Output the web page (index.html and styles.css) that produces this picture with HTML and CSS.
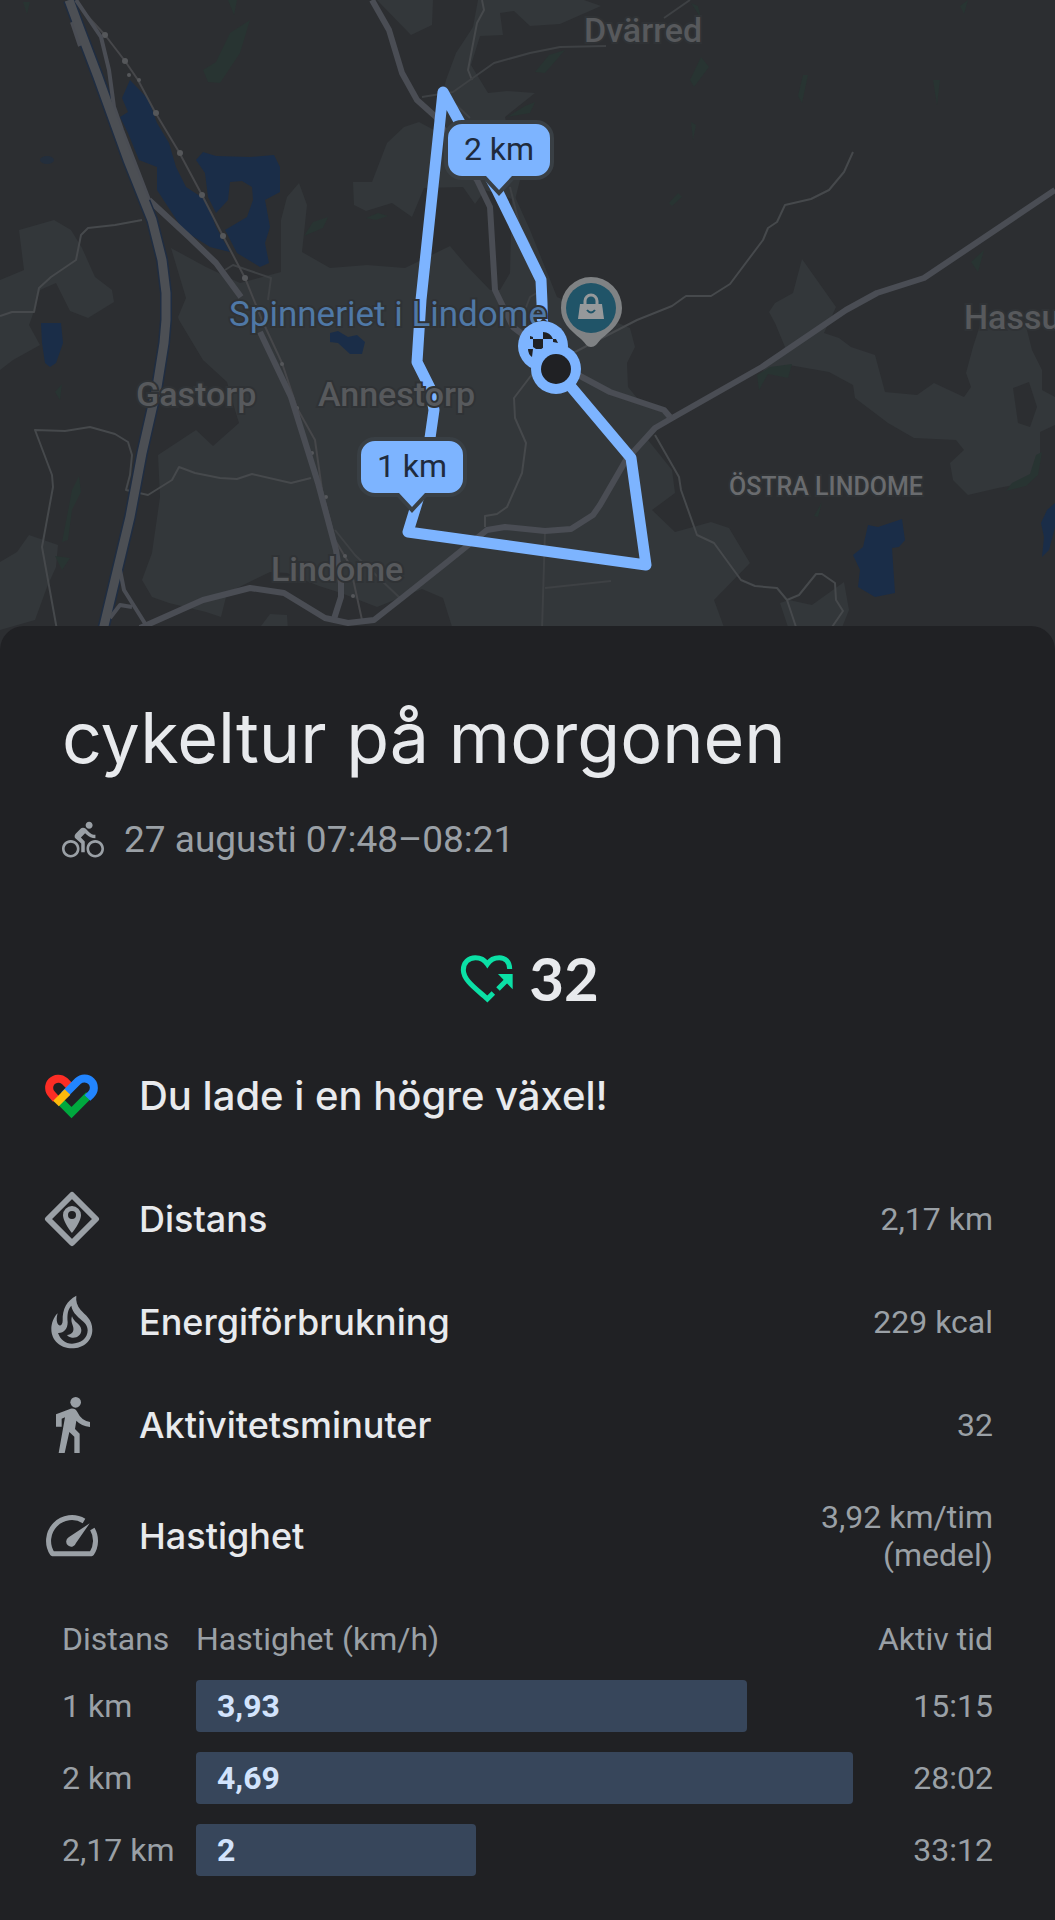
FILE: index.html
```html
<!DOCTYPE html>
<html lang="sv">
<head>
    <meta charset="UTF-8">
    <meta name="viewport" content="width=device-width, initial-scale=1">
    <title>cykeltur på morgonen</title>
    <link rel="stylesheet" href="styles.css">
</head>
<body>

    <svg class="map" viewBox="0 0 1055 650" role="img" aria-label="Karta över rutten">
        <!-- land -->
        <g class="land">
            <polygon points="377,0 411,35 432,25 433,0"/>
            <polygon points="478,0 584,0 601,6 560,24 530,26 514,11 500,13 503,35 480,36 471,65 488,93 507,91 535,93 505,117 520,180 515,200 485,190 475,204 463,187 424,188 412,217 392,203 366,211 354,205 353,182 372,182 387,143 404,127 419,122 434,130 446,80 456,53 473,27"/>
            <polygon points="299,183 307,205 302,252 330,268 367,265 405,268 450,246 466,265 490,290 500,290 510,273 512,190 530,230 557,297 630,328 635,347 627,363 628,387 637,398 670,417 648,440 672,470 675,493 652,510 675,532 711,522 729,528 750,563 714,600 725,630 453,630 443,598 422,589 377,607 341,593 319,586 287,573 270,572 227,593 221,617 206,612 169,603 152,597 142,580 152,553 160,497 158,455 196,430 213,446 239,423 235,410 227,382 203,360 179,320 178,317 186,298 171,248 206,267 240,283 281,272 281,220 287,197"/>
            <polygon points="0,280 24,270 19,230 54,220 71,230 82,248 95,277 112,290 114,302 88,318 70,311 56,283 40,290 32,317 29,325 40,345 13,360 0,370"/>
            <polygon points="0,562 17,552 29,535 58,545 56,567 47,587 35,620 0,630"/>
            <polygon points="802,259 836,307 824,333 839,338 851,347 875,355 885,392 917,395 934,383 964,397 971,387 966,373 973,347 981,322 1025,322 1032,350 1042,370 1042,390 1055,397 1055,425 1040,432 1040,455 1035,475 1025,483 998,488 968,495 953,480 950,463 964,450 956,440 914,438 888,423 855,398 853,385 829,372 789,365 762,372 785,347 775,323 769,312 775,303 793,293"/>
            <polygon points="780,603 789,600 812,605 844,582 849,610 841,630 789,630"/>
            <polygon points="258,630 270,614 287,615 288,630"/>
        </g>
        <polygon class="ground" points="1013,388 1029,382 1037,407 1030,427 1018,423"/>

        <!-- forest -->
        <g class="forest">
            <polygon points="203,70 216,62 230,33 250,20 240,53 220,83 208,82"/>
            <polygon points="228,0 237,0 234,15"/>
            <polygon points="23,2 30,2 27,14"/>
            <polygon points="304,236 313,222 328,217 323,228"/>
            <polygon points="366,218 378,213 388,216 376,220"/>
            <polygon points="535,72 549,55 565,50 545,73"/>
            <polygon points="690,80 701,57 709,67 694,87"/>
            <polygon points="691,3 698,6 701,18"/>
            <polygon points="960,6 968,0 964,14"/>
            <polygon points="691,122 696,125 693,140"/>
            <polygon points="669,203 678,193 682,197 672,206"/>
            <polygon points="803,75 808,75 802,103 798,96"/>
            <polygon points="933,80 940,80 937,105"/>
            <polygon points="971,262 984,250 978,272"/>
            <polygon points="1036,455 1042,452 1038,475 1026,486 1006,491 1012,483 1030,474"/>
            <polygon points="757,375 770,367 792,364 788,378 768,374 759,390"/>
            <polygon points="814,516 822,502 818,517"/>
            <polygon points="507,117 525,106 535,102 530,113"/>
            <polygon points="72,490 79,476 81,492 72,510 68,540 62,542"/>
            <polygon points="55,556 70,558 62,570"/>
            <polygon points="55,392 62,384 60,400"/>
        </g>

        <!-- water -->
        <g class="water">
            <polygon points="130,80 149,100 157,123 169,143 176,167 186,187 206,200 216,227 230,252 210,247 183,230 172,213 157,190 157,167 139,160 128,133 120,117 128,112 122,98"/>
            <polygon points="196,160 203,152 216,156 250,157 274,155 280,167 280,192 265,200 270,227 265,243 269,263 260,267 237,253 225,230 247,217 253,200 252,187 242,181 230,182 228,200 216,213 208,197 205,173"/>
            <polygon points="41,323 61,323 63,343 56,363 50,367 45,363 42,343"/>
            <polygon points="330,333 338,331 348,337 357,335 365,342 362,354 350,354 338,343 330,342"/>
            <polygon points="868,525 878,527 902,519 905,540 899,547 892,548 895,593 875,597 858,587 860,570 853,555 863,547"/>
            <polygon points="1055,503 1047,510 1041,523 1044,537 1042,557 1049,550 1055,527"/>
            <ellipse cx="47" cy="160" rx="7" ry="4" opacity=".5"/>
        </g>

        <!-- roads -->
        <g class="road small">
            <polyline points="0,316 12,312 34,312 39,288 51,277 76,260 81,235 88,228 115,225 142,220"/>
            <polyline points="57,630 42,547 53,487 52,475 35,430 65,431 90,427 115,434 128,442 132,455 130,475 126,490 148,495 172,480 179,467 195,473 220,478 237,479 252,474 291,483 311,478"/>
            <polyline points="853,152 844,172 829,190 811,199 785,205 777,222 768,228 763,240 730,284 711,296 686,296 672,306 637,320 575,352"/>
            <polyline points="655,435 679,477 681,490 697,535 714,543 741,580 755,586 777,588 787,600 797,630"/>
            <polyline points="787,600 799,595 816,574 822,574 835,583 836,600 843,611 830,630"/>
            <polyline points="540,368 530,377 514,398 515,418 526,443 522,473 507,507 497,514 485,516 485,527"/>
            <polyline points="482,0 484,10 477,23 468,70 472,80"/>
        </g>
        <g class="road faint">
            <polyline points="545,531 542,630"/>
            <polyline points="545,588 611,581"/>
            <polyline points="422,97 453,92 494,63 530,53 560,47 606,46"/>
            <polyline points="664,18 690,0"/>
            <polyline points="453,102 470,118"/>
            <polyline points="510,187 520,227 530,245"/>
            <polyline points="225,270 233,265 271,278 268,300"/>
            <polyline points="525,310 530,297 545,288"/>
            <polyline points="335,530 355,555 402,600"/>
        </g>
        <g class="road rail">
            <polyline points="82,10 105,35 125,61 138,80 155,112 179,152 202,195 223,236 245,278 262,320 282,363 297,408 315,440 322,490 335,540 350,565 362,620"/>
            <g class="stops">
                <circle cx="105" cy="35" r="3"/>
                <circle cx="125" cy="61" r="3"/>
                <circle cx="129" cy="75" r="2"/>
                <circle cx="139" cy="80" r="2"/>
                <circle cx="156" cy="113" r="3"/>
                <circle cx="180" cy="153" r="3"/>
                <circle cx="202" cy="195" r="3"/>
                <circle cx="223" cy="236" r="3"/>
                <circle cx="245" cy="278" r="3"/>
                <circle cx="282" cy="364" r="2"/>
                <circle cx="297" cy="408" r="2"/>
                <circle cx="312" cy="453" r="2"/>
                <circle cx="326" cy="497" r="2"/>
                <circle cx="345" cy="556" r="2"/>
                <circle cx="353" cy="596" r="2"/>
            </g>
        </g>
        <g class="road main">
            <polyline points="149,200 189,237 216,263 241,297"/>
            <polyline points="260,332 291,397 318,483 336,550 341,583 341,597 333,622"/>
            <polyline points="140,628 203,600 250,588 284,593 325,618 348,623 374,620 402,598 446,563 487,530 505,527 545,531 571,529 593,515 600,505 626,460 655,428 674,417 762,367 846,310 877,293 924,278 1055,190"/>
            <polyline points="372,0 389,30 402,73 417,100 436,117 465,165 477,180 490,207 495,290 513,327 556,360 582,377 610,392 664,410 670,417"/>
        </g>
        <polyline class="highway-edge" points="69,0 79,27 98,77 128,160 152,220 162,260 166,293 166,320 164,343 157,387 142,453 130,517 103,630"/>
        <g class="road ramp">
            <polyline points="76,0 101,37 109,70 114,107 122,130 149,200"/>
            <polyline points="72,22 80,46"/>
            <polyline points="120,570 124,590 146,625"/>
            <polyline points="110,618 120,605 132,607"/>
        </g>
        <polyline class="highway" points="69,0 79,27 98,77 128,160 152,220 162,260 166,293 166,320 164,343 157,387 142,453 130,517 103,630"/>

        <!-- route -->
        <polyline class="route" points="543,346 542,303 541,280 497,190 443,92 421,300 417,362 430,388 434,410 424,480 408,532 646,565 631,458 556,369"/>

        <!-- place names -->
        <g class="places">
            <text x="584" y="42">Dvärred</text>
            <text x="136" y="406">Gastorp</text>
            <text x="318" y="406">Annestorp</text>
            <text x="271" y="581">Lindome</text>
            <text x="964" y="329">Hassu</text>
            <text class="poi" x="229" y="326">Spinneriet i Lindome</text>
            <text class="area" x="729" y="495">ÖSTRA LINDOME</text>
        </g>

        <!-- shop pin -->
        <path class="pin" d="M591 277a30 30 0 0 0-30 31c0 14 9 22 20 31 5 5 6 8 10 8s6-3 10-8c11-9 21-17 21-31a31 31 0 0 0-31-31z"/>
        <circle class="pin-face" cx="591" cy="308" r="25"/>
        <path class="bag" d="M580 304h22l2 15h-26z"/>
        <path class="bag-line" d="M585 306v-5a6 6 0 0 1 12 0v5"/>
        <path class="bag-smile" d="M587 310q4 5 8 0"/>

        <!-- finish and start -->
        <circle class="dot" cx="543" cy="346" r="25"/>
        <path class="flag" d="M543 332q7 0 10 7h-10zM533 339h10v10h-7l-3-2zM553 339h3l2 4-5-1zM528 349h5l-1 8q-4-3-4-8zM530 336l3 1v2h-3z"/>
        <circle class="dot" cx="556" cy="369" r="25"/>
        <circle class="dot-core" cx="556" cy="369" r="15"/>

        <!-- km bubbles -->
        <g class="bubble">
            <path d="M462 124h74a14 14 0 0 1 14 14v24a14 14 0 0 1-14 14h-24l-13 14-13-14h-24a14 14 0 0 1-14-14v-24a14 14 0 0 1 14-14z"/>
            <text x="499" y="160">2 km</text>
            <path d="M375 441h74a14 14 0 0 1 14 14v24a14 14 0 0 1-14 14h-24l-13 14-13-14h-24a14 14 0 0 1-14-14v-24a14 14 0 0 1 14-14z"/>
            <text x="412" y="477">1 km</text>
        </g>
    </svg>

    <main class="sheet">
        <h1 class="title">cykeltur på morgonen</h1>
        <p class="date">
            <svg class="bike" viewBox="0 0 24 24" aria-hidden="true"><path d="M15.500 5.500c1.100 0 2-.9 2-2s-.9-2-2-2-2 .9-2 2 .9 2 2 2zM5 12c-2.800 0-5 2.200-5 5s2.200 5 5 5 5-2.200 5-5-2.200-5-5-5zm0 8.500c-1.900 0-3.500-1.600-3.500-3.500s1.600-3.500 3.500-3.500 3.500 1.600 3.500 3.500-1.600 3.500-3.500 3.500zm5.800-10l2.400-2.400.8.8c1.300 1.300 3 2.100 5.100 2.100V9c-1.500 0-2.700-.6-3.600-1.500l-1.900-1.900c-.5-.4-1-.6-1.600-.6s-1.100.2-1.400.6L7.800 8.400c-.4.4-.6.9-.6 1.400 0 .6.2 1.100.6 1.400L11 14v5h2v-6.200l-2.200-2.300zM19 12c-2.800 0-5 2.200-5 5s2.200 5 5 5 5-2.200 5-5-2.200-5-5-5zm0 8.500c-1.900 0-3.500-1.600-3.500-3.500s1.600-3.500 3.500-3.500 3.500 1.600 3.500 3.500-1.600 3.500-3.500 3.500z"/></svg>
            <span>27 augusti 07:48–08:21</span>
        </p>

        <div class="points">
            <svg class="heart" viewBox="60 72 165 150" aria-hidden="true">
                <path class="heart-line" d="M209 120C209 98 195 86 178 86C162 86 150 93 142 105C134 93 120 86 106 86C86 86 70 101 70 123C70 156 115 184 142 210L160 192M174 180L200 154"/>
                <path class="heart-tip" d="M174 135h44v46z"/>
            </svg>
            <strong>32</strong>
        </div>

        <div class="row cheer">
            <svg class="icon" viewBox="0 0 56 56" aria-hidden="true">
                <g class="fit">
                    <path stroke="#fc2d25" d="M12 31L8 26.500A9.200 9.200 0 0 1 20.500 13L27 19.500"/>
                    <path stroke="#00a83e" d="M13 30L27.500 44.500L45 27"/>
                    <path stroke="#2285ff" d="M20 27L34 13A9.200 9.200 0 0 1 47 26.500L43.500 30"/>
                    <path stroke="#fdb90b" d="M12 35.500L23.500 24"/>
                </g>
            </svg>
            <h2>Du lade i en högre växel!</h2>
        </div>

        <div class="row">
            <svg class="icon" viewBox="0 0 56 56" aria-hidden="true">
                <path class="line" d="M28 4L52 28L28 52L4 28z"/>
                <path d="M28 15a9 9 0 0 0-9 9c0 7 9 18 9 18s9-11 9-18a9 9 0 0 0-9-9zm0 5a4 4 0 1 1 0 8 4 4 0 0 1 0-8z"/>
            </svg>
            <h3>Distans</h3>
            <span class="value">2,17 km</span>
        </div>
        <div class="row">
            <svg class="icon" viewBox="42 45 168 168" aria-hidden="true">
                <path fill-rule="evenodd" d="M139 50C110 65 97 90 98 125C98 141 86 144 82 132C79 124 80 112 83 103C70 115 64 135 64 150C64 185 92 208 126 208C160 208 187 185 187 152C187 120 165 108 152 93C141 80 137 66 139 50zM124 80C127 98 138 108 150 119C164 131 173 138 173 154C173 178 152 194 126 194C106 194 91 182 84 162C101 163 113 150 113 130C111 108 113 92 124 80z"/>
                <path d="M126 112C131 130 153 135 154 153C154 168 141 178 126 176C119 175 114 172 111 168C125 166 132 158 130 146C128 135 121 128 126 112z"/>
            </svg>
            <h3>Energiförbrukning</h3>
            <span class="value">229 kcal</span>
        </div>
        <div class="row">
            <svg class="icon" viewBox="42 353 168 168" aria-hidden="true">
                <circle cx="137" cy="369" r="16"/>
                <path d="M78 405L122 388Q136 386 142 398Q154 424 180 428V443Q154 440 139 424L135 449L149 463V521H133V472L118 458L104 521H86L105 414L95 418V442H78z"/>
            </svg>
            <h3>Aktivitetsminuter</h3>
            <span class="value">32</span>
        </div>
        <div class="row">
            <svg class="icon" viewBox="42 685 168 168" aria-hidden="true">
                <path class="gauge" d="M162 724A70 70 0 0 0 67 822H185A70 70 0 0 0 187 748"/>
                <path d="M179 731L138 790A15 15 0 1 1 116 773z"/>
            </svg>
            <h3>Hastighet</h3>
            <span class="value">3,92 km/tim<br>(medel)</span>
        </div>

        <table class="splits">
            <thead>
                <tr>
                    <th class="dist">Distans</th>
                    <th>Hastighet (km/h)</th>
                    <th class="time">Aktiv tid</th>
                </tr>
            </thead>
            <tbody>
                <tr>
                    <td>1 km</td>
                    <td><div class="bar" style="width: 83.8%">3,93</div></td>
                    <td class="time">15:15</td>
                </tr>
                <tr>
                    <td>2 km</td>
                    <td><div class="bar" style="width: 100%">4,69</div></td>
                    <td class="time">28:02</td>
                </tr>
                <tr>
                    <td>2,17 km</td>
                    <td><div class="bar" style="width: 42.6%">2</div></td>
                    <td class="time">33:12</td>
                </tr>
            </tbody>
        </table>
    </main>

</body>
</html>
```
FILE: styles.css
```css
* {
    margin: 0;
    padding: 0;
    box-sizing: border-box;
}
body {
    background: #202124;
    color: #e8eaed;
    font-family: Roboto, "Liberation Sans", sans-serif;
}

/* map */
.map {
    display: block;
    width: 100%;
    background: #2c2e31;
}
.ground {
    fill: #2c2e31;
}
.land {
    fill: #33373a;
}
.forest {
    fill: #283432;
}
.water {
    fill: #1a2d48;
}
.road, .highway, .highway-edge {
    fill: none;
    stroke: #4a4d54;
    stroke-linejoin: round;
}
.small {
    stroke: #46494c;
    stroke-width: 2;
}
.faint {
    stroke: #3e4144;
    stroke-width: 2;
}
.rail {
    stroke: #46474a;
    stroke-width: 2;
}
.stops {
    fill: #55575a;
    stroke: none;
}
.main {
    stroke-width: 6;
}
.ramp {
    stroke-width: 4;
}
.highway {
    stroke: #4c4f54;
    stroke-width: 9;
}
.highway-edge {
    stroke: #1f2d42;
    stroke-width: 12;
}
.route {
    fill: none;
    stroke: #7db4ff;
    stroke-width: 11;
    stroke-linejoin: round;
}
.places {
    fill: #57595c;
    stroke: #2f3235;
    stroke-width: 4;
    paint-order: stroke;
    font-size: 34px;
    font-weight: 500;
}
.places .poi {
    fill: #4f78a6;
    font-size: 35px;
    font-weight: 400;
}
.places .area {
    fill: #696b6e;
    font-size: 25px;
}
.pin {
    fill: #7f8284;
}
.pin-face {
    fill: #205468;
}
.bag {
    fill: #96999b;
}
.bag-line, .bag-smile {
    fill: none;
    stroke: #96999b;
    stroke-width: 3;
}
.bag-smile {
    stroke: #205468;
    stroke-width: 2;
}
.dot {
    fill: #7db4ff;
}
.dot-core, .flag {
    fill: #202124;
}
.bubble path {
    fill: #7db4ff;
    stroke: #393f44;
    stroke-width: 8;
    paint-order: stroke;
}
.bubble text {
    fill: #202b3d;
    font-size: 32px;
    text-anchor: middle;
}

/* sheet */
.sheet {
    position: relative;
    margin-top: -24px;
    padding: 68px 62px 24px;
    background: #202124;
    border-radius: 24px 24px 0 0;
}
.title {
    font-family: Inter, sans-serif;
    font-size: 70px;
    font-weight: 400;
    line-height: 88px;
}
.date {
    display: flex;
    align-items: center;
    gap: 20px;
    margin-top: 36px;
    color: #9aa0a6;
    font-size: 37px;
    line-height: 44px;
}
.bike {
    width: 42px;
    height: 42px;
    fill: #9aa0a6;
}
.points {
    display: flex;
    align-items: center;
    justify-content: center;
    gap: 14px;
    margin-top: 80px;
    padding-left: 4px;
    font-family: Lato, sans-serif;
    font-size: 60px;
    line-height: 72px;
}
.heart {
    width: 55px;
    height: 50px;
}
.heart-line {
    fill: none;
    stroke: #0be0a6;
    stroke-width: 15;
}
.heart-tip {
    fill: #0be0a6;
}
.row {
    display: flex;
    align-items: center;
    gap: 39px;
    min-height: 103px;
    margin-left: -18px;
}
.cheer {
    margin: 30px 0 20px -18px;
}
.icon {
    width: 56px;
    height: 56px;
    flex: none;
    fill: #9aa0a6;
}
.line {
    fill: none;
    stroke: #9aa0a6;
    stroke-width: 6;
    stroke-linejoin: round;
}
.gauge {
    fill: none;
    stroke: #9aa0a6;
    stroke-width: 15;
    stroke-linejoin: round;
}
.fit {
    fill: none;
    stroke-width: 8;
}
h2, h3 {
    font-family: Inter, sans-serif;
    font-size: 40px;
    font-weight: 500;
}
h3 {
    font-size: 36px;
}
.value {
    margin-left: auto;
    padding: 22px 0;
    color: #9aa0a6;
    font-size: 32px;
    line-height: 38px;
    text-align: right;
}
.splits {
    width: 100%;
    margin-top: 17px;
    border-collapse: collapse;
    color: #9aa0a6;
    font-size: 32px;
    line-height: 52px;
}
th {
    padding-bottom: 5px;
    font-weight: 400;
    text-align: left;
}
.dist {
    width: 134px;
}
th.time {
    width: 140px;
}
.time {
    text-align: right;
}
td {
    height: 72px;
}
.bar {
    height: 52px;
    padding-left: 21px;
    border-radius: 4px;
    background: #37465b;
    color: #d2e3fc;
    font-weight: 700;
}
```
